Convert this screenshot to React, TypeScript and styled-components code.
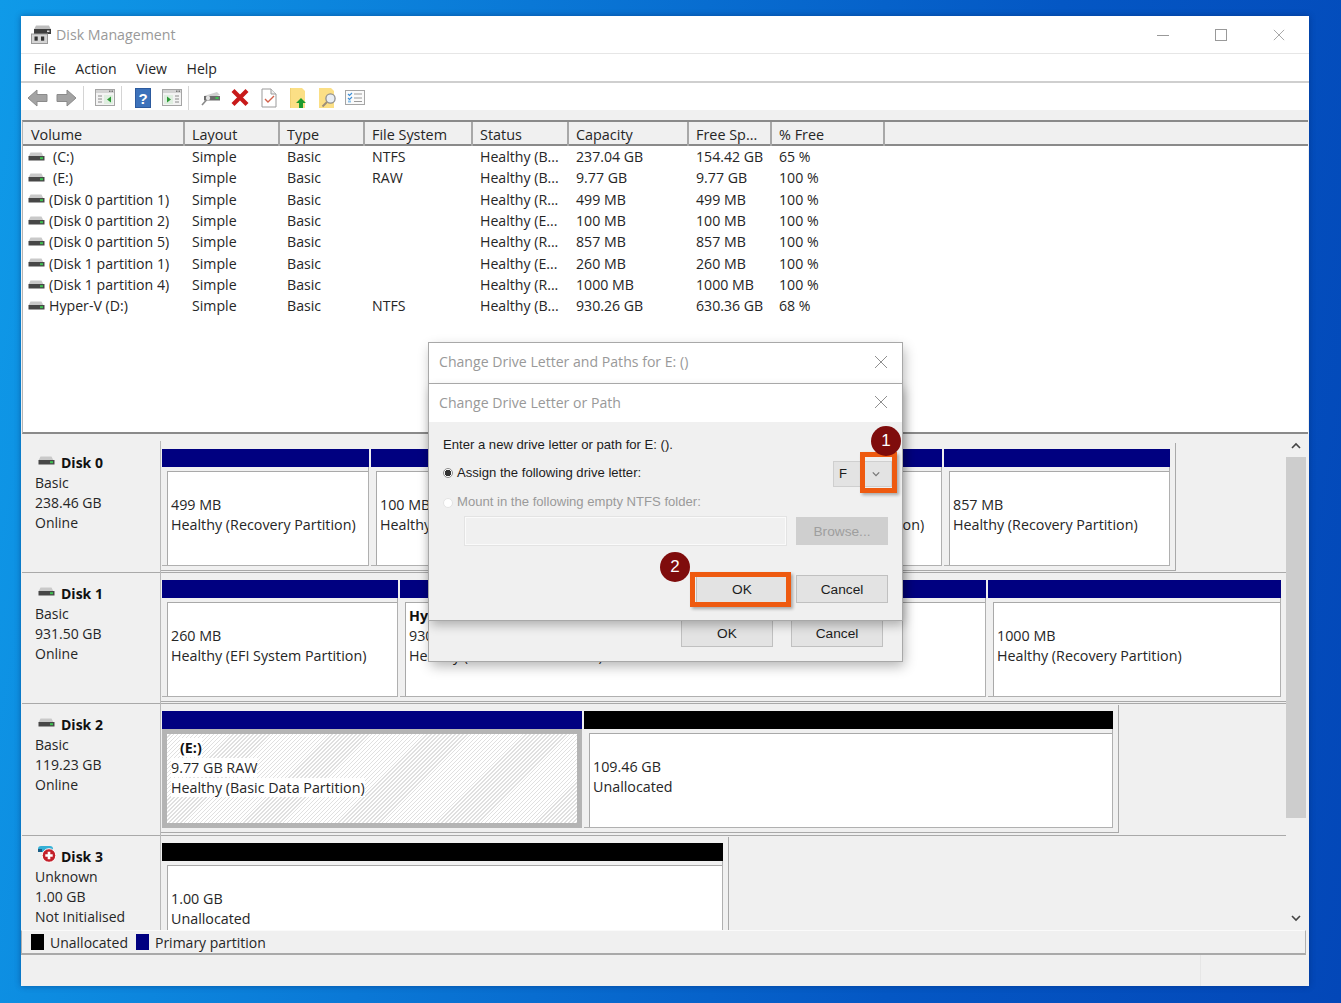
import React from 'react';
import styled, { createGlobalStyle } from 'styled-components';

const GlobalStyle = createGlobalStyle`
  html, body {
    margin: 0;
    padding: 0;
  }
  body {
    font-family: "Open Sans", "Noto Sans", sans-serif;
    font-size: 14px;
    color: #262626;
  }
  * {
    box-sizing: border-box;
  }
`;

const COLUMNS = '162px 95px 85px 108px 96px 120px 83px 113px 1fr';

const headers = ['Volume', 'Layout', 'Type', 'File System', 'Status', 'Capacity', 'Free Sp...', '% Free'];

const volumes = [
  { name: '(C:)', inset: true, fs: 'NTFS', status: 'Healthy (B...', cap: '237.04 GB', free: '154.42 GB', pct: '65 %' },
  { name: '(E:)', inset: true, fs: 'RAW', status: 'Healthy (B...', cap: '9.77 GB', free: '9.77 GB', pct: '100 %' },
  { name: '(Disk 0 partition 1)', fs: '', status: 'Healthy (R...', cap: '499 MB', free: '499 MB', pct: '100 %' },
  { name: '(Disk 0 partition 2)', fs: '', status: 'Healthy (E...', cap: '100 MB', free: '100 MB', pct: '100 %' },
  { name: '(Disk 0 partition 5)', fs: '', status: 'Healthy (R...', cap: '857 MB', free: '857 MB', pct: '100 %' },
  { name: '(Disk 1 partition 1)', fs: '', status: 'Healthy (E...', cap: '260 MB', free: '260 MB', pct: '100 %' },
  { name: '(Disk 1 partition 4)', fs: '', status: 'Healthy (R...', cap: '1000 MB', free: '1000 MB', pct: '100 %' },
  { name: 'Hyper-V (D:)', fs: 'NTFS', status: 'Healthy (B...', cap: '930.26 GB', free: '630.36 GB', pct: '68 %' },
];

type PartitionData = {
  width: number;
  title?: string;
  size: string;
  state: string;
  kind?: 'free';
  selected?: boolean;
};

const disks: {
  name: string;
  type: string;
  size: string;
  state: string;
  unknown?: boolean;
  partitions: PartitionData[];
}[] = [
  {
    name: 'Disk 0',
    type: 'Basic',
    size: '238.46 GB',
    state: 'Online',
    partitions: [
      { width: 207, size: '499 MB', state: 'Healthy (Recovery Partition)' },
      { width: 226, size: '100 MB', state: 'Healthy (EFI System Partition)' },
      { width: 343, title: '(C:)', size: '237.04 GB NTFS', state: 'Healthy (Boot, Page File, Crash Dump, Partition)' },
      { width: 226, size: '857 MB', state: 'Healthy (Recovery Partition)' },
    ],
  },
  {
    name: 'Disk 1',
    type: 'Basic',
    size: '931.50 GB',
    state: 'Online',
    partitions: [
      { width: 236, size: '260 MB', state: 'Healthy (EFI System Partition)' },
      { width: 586, title: 'Hyper-V (D:)', size: '930.26 GB NTFS', state: 'Healthy (Basic Data Partition)' },
      { width: 293, size: '1000 MB', state: 'Healthy (Recovery Partition)' },
    ],
  },
  {
    name: 'Disk 2',
    type: 'Basic',
    size: '119.23 GB',
    state: 'Online',
    partitions: [
      { width: 420, title: '(E:)', size: '9.77 GB RAW', state: 'Healthy (Basic Data Partition)', selected: true },
      { width: 529, size: '109.46 GB', state: 'Unallocated', kind: 'free' },
    ],
  },
  {
    name: 'Disk 3',
    type: 'Unknown',
    size: '1.00 GB',
    state: 'Not Initialised',
    unknown: true,
    partitions: [{ width: 561, size: '1.00 GB', state: 'Unallocated', kind: 'free' }],
  },
];

const DriveIcon = () => (
  <svg width="17" height="10" viewBox="0 0 17 10">
    <path d="M2.5 0.5h11l2 4h-15z" fill="#c9c9c9" />
    <rect x="0.5" y="4" width="16" height="4.5" fill="#474747" />
    <rect x="12" y="5.2" width="3" height="2" fill="#3cc24f" />
  </svg>
);

const UnknownDiskIcon = () => (
  <svg width="20" height="18" viewBox="1 0 20 18">
    <path d="M1 4q0-3 3-3h9q3 0 3 3v3H1z" fill="#35b0d6" />
    <rect x="1" y="4" width="4" height="3" fill="#1d5f86" />
    <circle cx="12" cy="10.5" r="6.8" fill="#c3202a" stroke="#fff" />
    <path d="M12 6.8v7.4M8.3 10.5h7.4" stroke="#fff" strokeWidth="2.6" />
  </svg>
);

const AppIcon = () => (
  <svg width="21" height="19" viewBox="0 0 21 19">
    <path d="M5 0.5h13l2 4H3z" fill="#bdbdbd" />
    <rect x="3" y="4" width="17" height="5" fill="#3d3d3d" />
    <rect x="16" y="5.5" width="2.5" height="1.6" fill="#ddd" />
    <rect x="0.5" y="9" width="16" height="9.5" fill="#d4d4d4" stroke="#9a9a9a" />
    <rect x="3.5" y="11.5" width="3.2" height="4.2" fill="#333" />
    <rect x="10" y="11.5" width="3.2" height="4.2" fill="#333" />
  </svg>
);

const ArrowBack = () => (
  <svg width="21" height="20" viewBox="0 0 21 20">
    <path d="M1 10 10 2v4.5h10v7H10V18z" fill="#a3a3a3" stroke="#8b8b8b" strokeLinejoin="round" />
  </svg>
);

const ArrowForward = () => (
  <svg width="21" height="20" viewBox="0 0 21 20">
    <path d="M20 10 11 2v4.5H1v7h10V18z" fill="#a3a3a3" stroke="#8b8b8b" strokeLinejoin="round" />
  </svg>
);

const PaneIcon = ({ right }: { right?: boolean }) => (
  <svg width="20" height="17" viewBox="0 0 20 17">
    <rect x="0.5" y="0.5" width="19" height="16" fill="#f3f3f3" stroke="#a5a5a5" />
    <rect x="1" y="1" width="18" height="3" fill="#d3d3d3" />
    <rect x="14" y="1.5" width="1.5" height="1.5" fill="#777" />
    <rect x="16.5" y="1.5" width="1.5" height="1.5" fill="#777" />
    {right ? (
      <>
        <rect x="2" y="6" width="9" height="9" fill="#dfeee0" />
        <path d="M5 7.5v6l4-3z" fill="#2c9a35" />
        <path d="M13 7h4M13 10h4M13 13h4" stroke="#8a8a8a" />
      </>
    ) : (
      <>
        <path d="M3 7h4M3 10h4M3 13h4" stroke="#8a8a8a" />
        <rect x="9" y="6" width="9" height="9" fill="#dfeee0" />
        <path d="M16 7.5v6l-4-3z" fill="#2c9a35" />
      </>
    )}
  </svg>
);

const HelpIcon = () => (
  <svg width="16" height="20" viewBox="0 0 16 20">
    <rect width="16" height="20" fill="#2c5a9e" />
    <rect x="1" y="1" width="14" height="18" fill="#3d72bb" />
    <text x="8" y="16" textAnchor="middle" fontSize="15" fontWeight="700" fontFamily="Liberation Sans" fill="#fff">
      ?
    </text>
  </svg>
);

const DriveLinkIcon = () => (
  <svg width="20" height="18" viewBox="0 0 20 18">
    <path d="M3 7l13-4 3 3-13 4z" fill="#cfcfcf" />
    <path d="M3 7h16v4.5H3z" fill="#6a6a6a" />
    <rect x="14.5" y="8" width="3" height="2" fill="#3cc24f" />
    <circle cx="7" cy="9" r="2.2" fill="#e4e4e4" />
    <path d="M5.5 11 1 16" stroke="#8a8a8a" strokeWidth="1.6" />
  </svg>
);

const DeleteIcon = () => (
  <svg width="18" height="17" viewBox="0 0 18 17">
    <path d="M2 1.5 16 15.5M16 1.5 2 15.5" stroke="#c81a1a" strokeWidth="4.2" />
  </svg>
);

const CheckDocIcon = () => (
  <svg width="18" height="20" viewBox="0 0 18 20">
    <path d="M1 1h9l5 5v13H1z" fill="#fff" stroke="#9b9b9b" />
    <path d="M10 1v5h5" fill="#eee" stroke="#9b9b9b" />
    <path d="M4 11l3 3 6-6" fill="none" stroke="#d2604a" strokeWidth="1.4" />
  </svg>
);

const FolderUpIcon = () => (
  <svg width="17" height="20" viewBox="0 0 17 20">
    <path d="M0 0h12l3 3v17H0z" fill="#fbdf85" />
    <path d="M0 0v20" stroke="#e4c465" />
    <path d="M11 10l5 5h-3v5H9v-5H6z" fill="#1e9a2d" />
  </svg>
);

const FolderFindIcon = () => (
  <svg width="18" height="20" viewBox="0 0 18 20">
    <path d="M0 0h12l3 3v17H0z" fill="#fbdf85" />
    <circle cx="11.5" cy="10.5" r="4.6" fill="#e8edf3" stroke="#8f8f8f" strokeWidth="1.3" />
    <path d="M8 14l-4.5 4.5" stroke="#9c8f7a" strokeWidth="2" />
  </svg>
);

const ListIcon = () => (
  <svg width="20" height="15" viewBox="0 0 20 15">
    <rect x="0.5" y="0.5" width="19" height="14" fill="#fafafa" stroke="#a5a5a5" />
    <path d="M3 4l1.5 1.5L7 3M3 8l1.5 1.5L7 7" fill="none" stroke="#3f8fd6" strokeWidth="1.2" />
    <path d="M9 4h8M9 8h8M9 11.5h8" stroke="#9a9a9a" />
    <rect x="3" y="10.5" width="3" height="2" fill="#8ec3ec" />
  </svg>
);

const CloseGlyph = ({ size = 14, color = '#8f8f8f' }: { size?: number; color?: string }) => (
  <svg width={size} height={size} viewBox="0 0 14 14">
    <path d="M1 1l12 12M13 1 1 13" stroke={color} strokeWidth="1" />
  </svg>
);

const Chevron = ({ up, size = 10, color = '#444' }: { up?: boolean; size?: number; color?: string }) => (
  <svg width={size} height={size} viewBox="0 0 10 10">
    <path d={up ? 'M1 7l4-4 4 4' : 'M1 3l4 4 4-4'} fill="none" stroke={color} strokeWidth="1.6" />
  </svg>
);

export default function App() {
  return (
    <Desktop>
      <GlobalStyle />
      <Window>
        <TitleBar>
          <AppIcon />
          <TitleText>Disk Management</TitleText>
          <WindowControls>
            <svg width="12" height="12" viewBox="0 0 12 12">
              <path d="M0 6.5h12" stroke="#999" />
            </svg>
            <svg width="12" height="12" viewBox="0 0 12 12">
              <rect x="0.5" y="0.5" width="11" height="11" fill="none" stroke="#999" />
            </svg>
            <CloseGlyph size={12} color="#999" />
          </WindowControls>
        </TitleBar>

        <MenuBar>
          <span>File</span>
          <span>Action</span>
          <span>View</span>
          <span>Help</span>
        </MenuBar>

        <Toolbar>
          <ToolGroup $pad={0} $separated>
            <ToolSlot $after={8}>
              <ArrowBack />
            </ToolSlot>
            <ToolSlot>
              <ArrowForward />
            </ToolSlot>
          </ToolGroup>
          <ToolGroup $pad={11} $separated>
            <ToolSlot>
              <PaneIcon />
            </ToolSlot>
          </ToolGroup>
          <ToolGroup $pad={13} $separated>
            <ToolSlot $after={11}>
              <HelpIcon />
            </ToolSlot>
            <ToolSlot>
              <PaneIcon right />
            </ToolSlot>
          </ToolGroup>
          <ToolGroup $pad={12}>
            <ToolSlot $after={10}>
              <DriveLinkIcon />
            </ToolSlot>
            <ToolSlot $after={12}>
              <DeleteIcon />
            </ToolSlot>
            <ToolSlot $after={11}>
              <CheckDocIcon />
            </ToolSlot>
            <ToolSlot $after={12}>
              <FolderUpIcon />
            </ToolSlot>
            <ToolSlot $after={8}>
              <FolderFindIcon />
            </ToolSlot>
            <ToolSlot>
              <ListIcon />
            </ToolSlot>
          </ToolGroup>
        </Toolbar>

        <ToolbarStrip />

        <VolumePanel>
          <HeaderRow>
            {headers.map((h, i) => (
              <HeaderCell key={h} $first={i === 0}>
                {h}
              </HeaderCell>
            ))}
          </HeaderRow>
          <VolumeRows>
            {volumes.map((v) => (
              <VolumeRow key={v.name}>
                <VolumeName $inset={v.inset}>
                  <DriveIcon />
                  <span>{v.name}</span>
                </VolumeName>
                <Cell>Simple</Cell>
                <Cell>Basic</Cell>
                <Cell>{v.fs}</Cell>
                <Cell>{v.status}</Cell>
                <Cell>{v.cap}</Cell>
                <Cell>{v.free}</Cell>
                <Cell>{v.pct}</Cell>
              </VolumeRow>
            ))}
          </VolumeRows>
        </VolumePanel>

        <DiskPanel>
          <DiskList>
            {disks.map((d) => (
              <DiskRow key={d.name}>
                <DiskLabel>
                  <DiskName>
                    <DiskIconSlot>{d.unknown ? <UnknownDiskIcon /> : <DriveIcon />}</DiskIconSlot>
                    <strong>{d.name}</strong>
                  </DiskName>
                  <div>{d.type}</div>
                  <div>{d.size}</div>
                  <div>{d.state}</div>
                </DiskLabel>
                <PartitionFrame>
                  {d.partitions.map((p) => (
                    <Partition key={p.size + p.state} $width={p.width}>
                      <PartitionBar $free={p.kind === 'free'} />
                      <PartitionCell $selected={p.selected}>
                        <PartitionBox $hatched={p.selected}>
                          <PartitionTitle $indent={p.selected}>
                            <TextChip $show={p.selected}>{p.title}</TextChip>
                          </PartitionTitle>
                          <PartitionLine>
                            <TextChip $show={p.selected}>{p.size}</TextChip>
                          </PartitionLine>
                          <PartitionLine>
                            <TextChip $show={p.selected}>{p.state}</TextChip>
                          </PartitionLine>
                        </PartitionBox>
                      </PartitionCell>
                    </Partition>
                  ))}
                </PartitionFrame>
              </DiskRow>
            ))}
          </DiskList>
          <ScrollBar>
            <ScrollArrow $height={23}>
              <Chevron up />
            </ScrollArrow>
            <ScrollThumb />
            <ScrollArrow $height={24}>
              <Chevron />
            </ScrollArrow>
          </ScrollBar>
        </DiskPanel>

        <Legend>
          <LegendSwatch $color="#000" />
          <span>Unallocated</span>
          <LegendSwatch $color="#000080" />
          <span>Primary partition</span>
        </Legend>

        <StatusBar>
          <StatusPane />
          <StatusPane $fixed />
        </StatusBar>

        <OuterDialog>
          <DialogTitle>
            <span>Change Drive Letter and Paths for E: ()</span>
            <CloseGlyph />
          </DialogTitle>
          <OuterFooter>
            <DialogButton>OK</DialogButton>
            <DialogButton>Cancel</DialogButton>
          </OuterFooter>

          <InnerDialog>
            <DialogTitle $inner>
              <span>Change Drive Letter or Path</span>
              <CloseGlyph />
            </DialogTitle>
            <DialogBody>
              <DialogLine>Enter a new drive letter or path for E: ().</DialogLine>
              <AssignRow>
                <RadioLabel $raised>
                  <Radio type="radio" checked readOnly />
                  Assign the following drive letter:
                </RadioLabel>
                <DriveSelect>
                  <DriveLetter>F</DriveLetter>
                  <DriveArrow>
                    <Chevron size={8} color="#777" />
                    <Highlight $top={-10} $right={-6} $bottom={-7} $left={0} />
                    <Badge $left={11} $top={-36}>
                      1
                    </Badge>
                  </DriveArrow>
                </DriveSelect>
              </AssignRow>
              <MountRow>
                <RadioLabel $disabled>
                  <Radio type="radio" disabled />
                  Mount in the following empty NTFS folder:
                </RadioLabel>
              </MountRow>
              <FolderRow>
                <FolderInput />
                <DialogButton $disabled>Browse...</DialogButton>
              </FolderRow>
              <ButtonRow>
                <MarkedButton>
                  <DialogButton>OK</DialogButton>
                  <Highlight $top={-3} $right={-3} $bottom={-4} $left={-6} />
                  <Badge $left={-36} $top={-23}>
                    2
                  </Badge>
                </MarkedButton>
                <DialogButton>Cancel</DialogButton>
              </ButtonRow>
            </DialogBody>
          </InnerDialog>
        </OuterDialog>
      </Window>
    </Desktop>
  );
}

// Styles
const Desktop = styled.div`
  width: 1341px;
  height: 1003px;
  padding: 16px 32px 17px 21px;
  overflow: hidden;
  background: linear-gradient(100deg, #0f9ae8 0%, #0a78d6 35%, #0457c4 70%, #0347b8 100%);
`;

const Window = styled.div`
  position: relative;
  display: flex;
  flex-direction: column;
  height: 970px;
  background: #f0f0f0;
  box-shadow: 0 0 6px rgba(0, 30, 90, 0.45);
`;

const TitleBar = styled.div`
  display: flex;
  align-items: center;
  flex: 0 0 38px;
  padding: 0 24px 0 10px;
  background: #fff;
  border-bottom: 1px solid #e6e6e6;
`;

const TitleText = styled.div`
  margin-left: 4px;
  font-size: 14.2px;
  color: #999;
`;

const WindowControls = styled.div`
  display: flex;
  align-items: center;
  gap: 46px;
  margin-left: auto;
`;

const MenuBar = styled.div`
  display: flex;
  align-items: center;
  gap: 19.5px;
  flex: 0 0 29px;
  padding: 1px 0 0 12.5px;
  font-size: 14.1px;
  background: #fff;
  border-bottom: 2px solid #cfcfcf;
`;

const Toolbar = styled.div`
  display: flex;
  align-items: center;
  flex: 0 0 27px;
  padding: 2px 0 0 6px;
  background: #fff;
`;

const ToolGroup = styled.div<{ $pad: number; $separated?: boolean }>`
  display: flex;
  align-items: center;
  height: 24px;
  padding: 0 6px 0 ${(p) => p.$pad}px;
  border-right: ${(p) => (p.$separated ? '1px solid #d4d4d4' : 'none')};
`;

const ToolSlot = styled.span<{ $after?: number }>`
  display: flex;
  margin-right: ${(p) => p.$after ?? 0}px;
`;

const ToolbarStrip = styled.div`
  flex: 0 0 10px;
  background: #f0f0f0;
`;

const VolumePanel = styled.div`
  flex: 0 0 314px;
  margin: 0 1px 0 1px;
  background: #fff;
  border-top: 2px solid #8a8a8a;
  border-bottom: 2px solid #8a8a8a;
  border-left: 1px solid #b5b5b5;
`;

const HeaderRow = styled.div`
  display: grid;
  grid-template-columns: ${COLUMNS};
  height: 24px;
  font-size: 14.4px;
  background: #f0f0f0;
  border-bottom: 2px solid #8a8a8a;
`;

const HeaderCell = styled.div<{ $first?: boolean }>`
  padding: 2px 0 0 ${(p) => (p.$first ? 8 : 7)}px;
  line-height: 22px;
  white-space: nowrap;
  border-right: 2px solid #a8a8a8;
`;

const VolumeRows = styled.div`
  padding-top: 0;
  font-size: 14.15px;
`;

const VolumeRow = styled.div`
  display: grid;
  grid-template-columns: ${COLUMNS};
  height: 21.33px;
  line-height: 21.33px;
`;

const Cell = styled.div`
  padding-left: 7px;
  white-space: nowrap;
`;

const VolumeName = styled.div<{ $inset?: boolean }>`
  display: flex;
  align-items: center;
  gap: ${(p) => (p.$inset ? 8 : 4)}px;
  padding-left: 5px;
  white-space: nowrap;
`;

const DiskPanel = styled.div`
  display: flex;
  flex: 0 0 496px;
  padding-right: 3px;
  overflow: hidden;
`;

const DiskList = styled.div`
  flex: 1;
  min-width: 0;
  padding: 7px 0 0 1px;
  overflow: hidden;
`;

const DiskRow = styled.div`
  display: flex;
  height: 131.2px;

  & + & {
    box-shadow: inset 0 1px 0 #a9a9a9;
  }
`;

const DiskLabel = styled.div`
  flex: 0 0 139px;
  padding: 11px 0 0 13px;
  line-height: 20px;
  border-right: 1px solid #b9b9b9;
`;

const DiskName = styled.div`
  display: flex;
  align-items: center;
  gap: 6px;
  height: 21px;
  padding: 1px 0 0 3px;

  strong {
    font-weight: 700;
    color: #111;
  }
`;

const DiskIconSlot = styled.span`
  display: flex;
  flex: 0 0 17px;
  min-width: 0;
  margin-top: -5px;

  svg {
    flex: none;
  }
`;

const PartitionFrame = styled.div`
  display: flex;
  flex: 0 0 auto;
  gap: 2px;
  align-self: flex-start;
  height: 128px;
  margin-top: 2px;
  padding: 6px 5px 0 1px;
  font-size: 14.3px;
  background: #f0f0f0;
  border-right: 1px solid #a9a9a9;
  border-bottom: 1px solid #a9a9a9;
`;

const Partition = styled.div<{ $width: number }>`
  display: flex;
  flex-direction: column;
  width: ${(p) => p.$width}px;
`;

const PartitionBar = styled.div<{ $free?: boolean }>`
  flex: 0 0 18px;
  background: ${(p) => (p.$free ? '#000' : '#000080')};
`;

const PartitionCell = styled.div<{ $selected?: boolean }>`
  display: flex;
  height: 99px;
  padding: ${(p) => (p.$selected ? '0' : '4px 0 0 5px')};
  border: ${(p) => (p.$selected ? '5px solid #b4b4b4' : 'none')};
  border-right: ${(p) => (p.$selected ? '5px solid #b4b4b4' : '1px solid #b0b0b0')};
  border-bottom: ${(p) => (p.$selected ? '5px solid #b4b4b4' : '1px solid #b0b0b0')};
`;

const PartitionBox = styled.div<{ $hatched?: boolean }>`
  flex: 1;
  min-width: 0;
  padding: ${(p) => (p.$hatched ? '4px 0 0 4px' : '3px 0 0 3px')};
  overflow: hidden;
  line-height: 20px;
  white-space: nowrap;
  background: ${(p) =>
    p.$hatched ? 'repeating-linear-gradient(-45deg, #e0e0e0 0 1px, #ffffff 1px 2.8px)' : '#fff'};
  border-top: ${(p) => (p.$hatched ? 'none' : '1px solid #a9a9a9')};
  border-left: ${(p) => (p.$hatched ? 'none' : '1px solid #a9a9a9')};
`;

const PartitionTitle = styled.div<{ $indent?: boolean }>`
  height: 20px;
  padding-left: ${(p) => (p.$indent ? 9 : 0)}px;
  font-weight: 700;
  color: #111;
`;

const PartitionLine = styled.div`
  height: 20px;
`;

const TextChip = styled.span<{ $show?: boolean }>`
  background: ${(p) => (p.$show ? '#fff' : 'transparent')};
`;

const ScrollBar = styled.div`
  display: flex;
  flex-direction: column;
  flex: 0 0 20px;
`;

const ScrollArrow = styled.div<{ $height: number }>`
  display: flex;
  align-items: center;
  justify-content: center;
  flex: 0 0 ${(p) => p.$height}px;
  margin-top: auto;

  &:first-child {
    margin-top: 0;
  }
`;

const ScrollThumb = styled.div`
  flex: 0 0 361px;
  background: #cdcdcd;
`;

const Legend = styled.div`
  display: flex;
  align-items: center;
  flex: 0 0 25px;
  margin-right: 3px;
  padding-left: 9px;
  background: #f0f0f0;
  border-top: 1px solid #fafafa;
  border-right: 1px solid #b0b0b0;
  border-bottom: 2px solid #a9a9a9;
  border-left: 1px solid #b0b0b0;
`;

const LegendSwatch = styled.i<{ $color: string }>`
  width: 13px;
  height: 16px;
  margin-right: 6px;
  background: ${(p) => p.$color};

  & ~ & {
    margin-left: 8px;
  }
`;

const StatusBar = styled.div`
  display: flex;
  flex: 1;
  background: #f0f0f0;
`;

const StatusPane = styled.div<{ $fixed?: boolean }>`
  flex: ${(p) => (p.$fixed ? '0 0 109px' : '1')};
  border-left: ${(p) => (p.$fixed ? '1px solid #e6e6e6' : 'none')};
`;

const OuterDialog = styled.div`
  position: absolute;
  top: 327px;
  left: 408px;
  display: flex;
  flex-direction: column;
  width: 473px;
  height: 318px;
  background: #f0f0f0;
  box-shadow: 0 0 0 1px #a8a8a8, 2px 5px 12px rgba(0, 0, 0, 0.3);
`;

const DialogTitle = styled.div<{ $inner?: boolean }>`
  display: flex;
  align-items: center;
  justify-content: space-between;
  flex: 0 0 ${(p) => (p.$inner ? 38 : 40)}px;
  padding: 0 14px ${(p) => (p.$inner ? 2 : 3)}px 10px;
  font-size: 14.1px;
  color: #999;
  background: #fff;
`;

const OuterFooter = styled.div`
  display: flex;
  justify-content: flex-end;
  gap: 18px;
  margin-top: auto;
  padding: 0 19px 14px 0;
`;

const InnerDialog = styled.div`
  position: absolute;
  top: 41px;
  left: 0;
  right: 0;
  display: flex;
  flex-direction: column;
  height: 236px;
  background: #f0f0f0;
  box-shadow: 0 0 0 1px #a8a8a8, 2px 5px 10px rgba(0, 0, 0, 0.28);
`;

const DialogBody = styled.div`
  padding: 13px 14px 0 14px;
  font-family: "Liberation Sans", Arial, sans-serif;
  font-size: 13.1px;
  color: #1c1c1c;
`;

const DialogLine = styled.div`
  height: 20px;
  line-height: 20px;
`;

const AssignRow = styled.div`
  display: flex;
  align-items: center;
  justify-content: space-between;
  height: 26px;
  margin: 6px -4px 0 0;
`;

const RadioLabel = styled.label<{ $disabled?: boolean; $raised?: boolean }>`
  display: flex;
  align-items: center;
  gap: 4px;
  margin-top: ${(p) => (p.$raised ? -4 : 0)}px;
  color: ${(p) => (p.$disabled ? '#9a9a9a' : '#1c1c1c')};
`;

const Radio = styled.input`
  appearance: none;
  width: 10px;
  height: 10px;
  margin: 1px 0 0 0;
  border: 1px solid #8c8c8c;
  border-radius: 50%;
  background: #fff;

  &:checked {
    background: radial-gradient(circle, #333 0 3px, #fff 3.5px);
  }

  &:disabled {
    border-color: #e4e4e4;
  }
`;

const DriveSelect = styled.div`
  display: flex;
  width: 59px;
  height: 26px;
  background: #e3e3e3;
  border: 1px solid #cfcfcf;
`;

const DriveLetter = styled.div`
  flex: 0 0 26px;
  padding-left: 5px;
  line-height: 24px;
`;

const DriveArrow = styled.div`
  position: relative;
  display: flex;
  align-items: center;
  justify-content: center;
  flex: 1;
`;

const Highlight = styled.div<{ $top: number; $right: number; $bottom: number; $left: number }>`
  position: absolute;
  top: ${(p) => p.$top}px;
  right: ${(p) => p.$right}px;
  bottom: ${(p) => p.$bottom}px;
  left: ${(p) => p.$left}px;
  border: 5px solid #ee5a10;
  box-shadow: 2px 2px 3px rgba(0, 0, 0, 0.3);
`;

const Badge = styled.div<{ $left: number; $top: number }>`
  position: absolute;
  top: ${(p) => p.$top}px;
  left: ${(p) => p.$left}px;
  display: flex;
  align-items: center;
  justify-content: center;
  width: 30px;
  height: 30px;
  font-size: 17px;
  color: #fff;
  background: #7f0c0c;
  border-radius: 50%;
`;

const MountRow = styled.div`
  height: 20px;
  margin-top: 5px;
  line-height: 20px;
`;

const FolderRow = styled.div`
  display: flex;
  gap: 10px;
  height: 28px;
  margin-top: 5px;
  padding-left: 22px;
`;

const FolderInput = styled.div`
  flex: 0 0 321px;
  background: #f0f0f0;
  border: 1px solid #fafafa;
  box-shadow: 0 0 0 1px #e3e3e3;
`;

const ButtonRow = styled.div`
  display: flex;
  justify-content: flex-end;
  gap: 8px;
  margin-top: 30px;
`;

const MarkedButton = styled.div`
  position: relative;
`;

const DialogButton = styled.div<{ $disabled?: boolean }>`
  display: flex;
  align-items: center;
  justify-content: center;
  width: 92px;
  height: 28px;
  font-family: "Liberation Sans", Arial, sans-serif;
  font-size: 13.7px;
  color: ${(p) => (p.$disabled ? '#9e9e9e' : '#1c1c1c')};
  background: ${(p) => (p.$disabled ? '#cfcfcf' : '#e3e3e3')};
  border: 1px solid ${(p) => (p.$disabled ? '#cfcfcf' : '#c0c0c0')};
`;
